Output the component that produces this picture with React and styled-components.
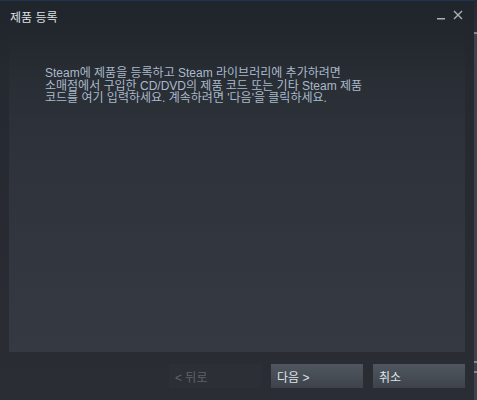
import React from "react";
import styled, { createGlobalStyle } from "styled-components";

const Global = createGlobalStyle`
  html, body { margin: 0; padding: 0; background: #3b4048; }
  body { font-family: "Liberation Sans", "Noto Sans CJK KR", sans-serif; }
`;

const Screen = styled.div`
  display: flex;
  width: 477px;
  height: 400px;
  overflow: hidden;
`;

const Window = styled.div`
  width: 474px;
  height: 400px;
  display: flex;
  flex-direction: column;
  background: linear-gradient(180deg, #20242b 0%, #252930 20%, #2a2d33 100%);
  border-top: 1px solid #1d3550;
  box-sizing: border-box;
`;

const Desktop = styled.div`
  flex: 1;
  background: linear-gradient(180deg, #252a31 0px, #2b3037 32px, #d6d8da 33px, #3e434b 34px, #3e434b 361px, #c8cacc 362px, #3e434b 363px, #3e434b 371px, #c8cacc 372px, #3e434b 373px);
`;

const TitleBar = styled.div`
  height: 33px;
  display: flex;
  align-items: center;
  justify-content: space-between;
  padding: 0 10px 0 10px;
  box-sizing: border-box;
`;

const Title = styled.div`
  font-size: 12px;
  color: #dde2e7;
  margin-top: -3px;
`;

const Controls = styled.div`
  display: flex;
  align-items: flex-start;
  gap: 7px;
  margin-top: -5px;
  margin-right: 1px;
`;

const Panel = styled.div`
  margin: 0 9px;
  height: 318px;
  box-sizing: border-box;
  padding: 33px 20px 0 36px;
  background: linear-gradient(180deg, rgba(53,58,66,0) 0%, rgba(50,54,62,0.6) 30%, #353a42 100%);
`;

const Body = styled.p`
  margin: 0;
  font-size: 12px;
  line-height: 12.5px;
  color: #a9bacb;
`;

const Footer = styled.div`
  display: flex;
  justify-content: flex-end;
  gap: 10px;
  padding: 12px 9px 0 0;
`;

const Button = styled.div`
  width: 92px;
  height: 24px;
  box-sizing: border-box;
  padding-left: 6px;
  display: flex;
  align-items: center;
  font-size: 12px;
  color: ${p => (p.$disabled ? "#5d636c" : "#dde3ea")};
  background: ${p =>
    p.$disabled
      ? "#2c2f35"
      : "linear-gradient(180deg, #50565f 0%, #3e434b 100%)"};
`;

export default function App() {
  return (
    <>
      <Global />
      <Screen>
        <Window>
          <TitleBar>
            <Title>제품 등록</Title>
            <Controls>
              <svg width="9" height="12" viewBox="0 0 9 12">
                <rect x="0" y="9" width="8" height="1.5" fill="#aeb2b6" />
              </svg>
              <svg width="10" height="12" viewBox="0 0 10 12">
                <path d="M1 2 L9 10 M9 2 L1 10" stroke="#aeb2b6" strokeWidth="1.4" />
              </svg>
            </Controls>
          </TitleBar>
          <Panel>
            <Body>
              Steam에 제품을 등록하고 Steam 라이브러리에 추가하려면
              <br />
              소매점에서 구입한 CD/DVD의 제품 코드 또는 기타 Steam 제품
              <br />
              코드를 여기 입력하세요. 계속하려면 '다음'을 클릭하세요.
            </Body>
          </Panel>
          <Footer>
            <Button $disabled>&lt; 뒤로</Button>
            <Button>다음 &gt;</Button>
            <Button>취소</Button>
          </Footer>
        </Window>
        <Desktop />
      </Screen>
    </>
  );
}
